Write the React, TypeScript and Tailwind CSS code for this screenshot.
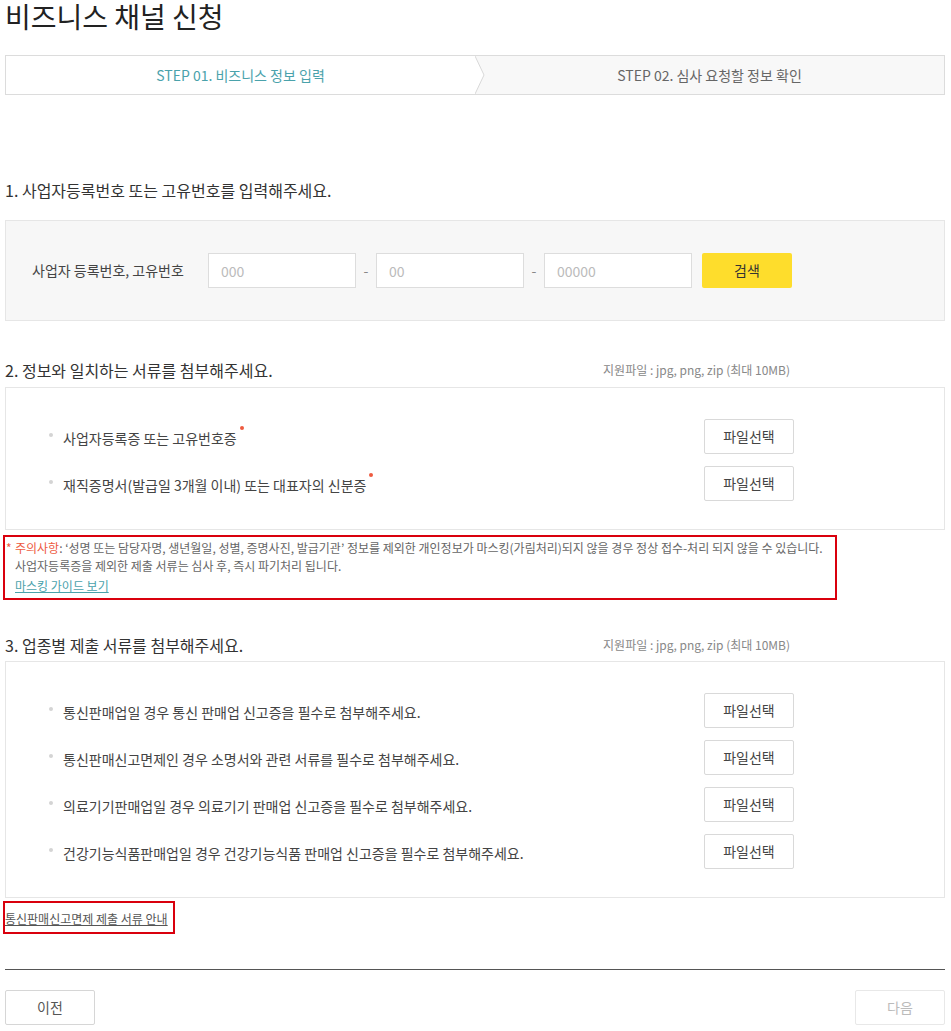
const FONT = "font-['Noto_Sans_CJK_KR','Noto_Sans',sans-serif]"

const docs2 = [
  { label: '사업자등록증 또는 고유번호증', required: true },
  { label: '재직증명서(발급일 3개월 이내) 또는 대표자의 신분증', required: true },
]

const docs3 = [
  { label: '통신판매업일 경우 통신 판매업 신고증을 필수로 첨부해주세요.' },
  { label: '통신판매신고면제인 경우 소명서와 관련 서류를 필수로 첨부해주세요.' },
  { label: '의료기기판매업일 경우 의료기기 판매업 신고증을 필수로 첨부해주세요.' },
  { label: '건강기능식품판매업일 경우 건강기능식품 판매업 신고증을 필수로 첨부해주세요.' },
]

function FileRow({ label, required }: { label: string; required?: boolean }) {
  return (
    <div className="flex items-center h-[35px] pl-[43px] pr-[150px]">
      <span className="w-[4px] h-[4px] rounded-full bg-[#d4d4d4] mr-[10px] -mt-[3px]" />
      <span className="flex-1 text-[14px] leading-[20px] text-[#444] pt-[2px]">
        <span className="relative">
          {label}
          {required && (
            <span className="absolute -right-[7px] top-[-2px] w-[4px] h-[4px] rounded-full bg-[#ee5a3f]" />
          )}
        </span>
      </span>
      <button className="w-[90px] h-[35px] border border-[#d9d9d9] rounded-[2px] bg-white text-[14px] text-[#444]">
        파일선택
      </button>
    </div>
  )
}

function SectionHead({ title, fileInfo }: { title: string; fileInfo?: boolean }) {
  return (
    <div className="flex items-center justify-between h-[24px]">
      <h3 className="text-[16px] leading-[24px] text-[#333] font-normal">{title}</h3>
      {fileInfo && (
        <span className="mr-[155px] text-[12px] text-[#888]">지원파일 : jpg, png, zip (최대 10MB)</span>
      )}
    </div>
  )
}

export default function App() {
  return (
    <div className={`${FONT} bg-white min-h-[1031px]`}>
      <div className="ml-[5px] w-[940px]">
        <h1 className="text-[28px] leading-[32px] text-[#222] font-normal">비즈니스 채널 신청</h1>

        {/* steps */}
        <div className="mt-[23px] grid grid-cols-2 h-[40px] border border-[#dcdcdc]">
          <div className="flex items-center justify-center bg-white text-[14px] text-[#4aa2ab]">
            STEP 01. 비즈니스 정보 입력
          </div>
          <div className="relative flex items-center justify-center bg-[#f8f8f8] text-[14px] text-[#666]">
            <svg className="absolute left-0 top-0" width="11" height="38" viewBox="0 0 11 38">
              <polygon points="0,0 9,19 0,38" fill="#ffffff" />
              <polyline points="0,0 9,19 0,38" fill="none" stroke="#d8d8d8" strokeWidth="1" />
            </svg>
            STEP 02. 심사 요청할 정보 확인
          </div>
        </div>

        {/* section 1 */}
        <div className="mt-[83px]">
          <SectionHead title="1. 사업자등록번호 또는 고유번호를 입력해주세요." />
          <div className="mt-[18px] h-[101px] flex items-center border border-[#e6e6e6] bg-[#f7f7f7] pl-[26px]">
            <label className="w-[176px] text-[14px] text-[#444]">사업자 등록번호, 고유번호</label>
            <input
              placeholder="000"
              className="w-[148px] h-[35px] px-[12px] border border-[#dddddd] bg-white text-[14px] placeholder-[#bbb] outline-none"
            />
            <span className="w-[20px] text-center text-[14px] text-[#888]">-</span>
            <input
              placeholder="00"
              className="w-[148px] h-[35px] px-[12px] border border-[#dddddd] bg-white text-[14px] placeholder-[#bbb] outline-none"
            />
            <span className="w-[20px] text-center text-[14px] text-[#888]">-</span>
            <input
              placeholder="00000"
              className="w-[148px] h-[35px] px-[12px] border border-[#dddddd] bg-white text-[14px] placeholder-[#bbb] outline-none"
            />
            <button className="ml-[10px] w-[90px] h-[35px] rounded-[2px] bg-[#fedd2c] text-[14px] text-[#333]">
              검색
            </button>
          </div>
        </div>

        {/* section 2 */}
        <div className="mt-[37px]">
          <SectionHead title="2. 정보와 일치하는 서류를 첨부해주세요." fileInfo />
          <div className="mt-[5px] border border-[#e6e6e6] pt-[31px] pb-[28px] flex flex-col gap-[12px]">
            {docs2.map(d => (
              <FileRow key={d.label} label={d.label} required={d.required} />
            ))}
          </div>
          <div className="mt-[5px] -ml-[2px] w-[834px] border-2 border-[#d9000d] pt-[2px] pb-[3px] text-[12px] leading-[18px] text-[#666]">
            <div className="flex">
              <span className="w-[10px] pl-[1px] text-[#ee5a3f]">*</span>
              <div>
                <p>
                  <span className="text-[#ee5a3f]">주의사항</span>: ‘성명 또는 담당자명, 생년월일, 성별, 증명사진, 발급기관’ 정보를 제외한 개인정보가 마스킹(가림처리)되지 않을 경우 정상 접수-처리 되지 않을 수 있습니다.
                </p>
                <p>사업자등록증을 제외한 제출 서류는 심사 후, 즉시 파기처리 됩니다.</p>
                <a href="#" className="block mt-[2px] text-[#4aa2ab] underline">마스킹 가이드 보기</a>
              </div>
            </div>
          </div>
        </div>

        {/* section 3 */}
        <div className="mt-[33px]">
          <SectionHead title="3. 업종별 제출 서류를 첨부해주세요." fileInfo />
          <div className="mt-[4px] border border-[#e6e6e6] pt-[31px] pb-[28px] flex flex-col gap-[12px]">
            {docs3.map(d => (
              <FileRow key={d.label} label={d.label} />
            ))}
          </div>
          <div className="mt-[3px] -ml-[2px] w-[172px] h-[33px] border-2 border-[#d9000d] pt-[2px]">
            <a href="#" className="text-[12px] leading-[18px] text-[#555] underline">통신판매신고면제 제출 서류 안내</a>
          </div>
        </div>

        <div className="mt-[35px] border-t border-[#555]" />

        <div className="mt-[20px] flex justify-between">
          <button className="w-[90px] h-[35px] border border-[#d6d6d6] rounded-[2px] bg-white text-[14px] text-[#555]">
            이전
          </button>
          <button className="w-[90px] h-[35px] border border-[#e8e8e8] rounded-[2px] bg-white text-[14px] text-[#bbb]">
            다음
          </button>
        </div>
      </div>
    </div>
  )
}
